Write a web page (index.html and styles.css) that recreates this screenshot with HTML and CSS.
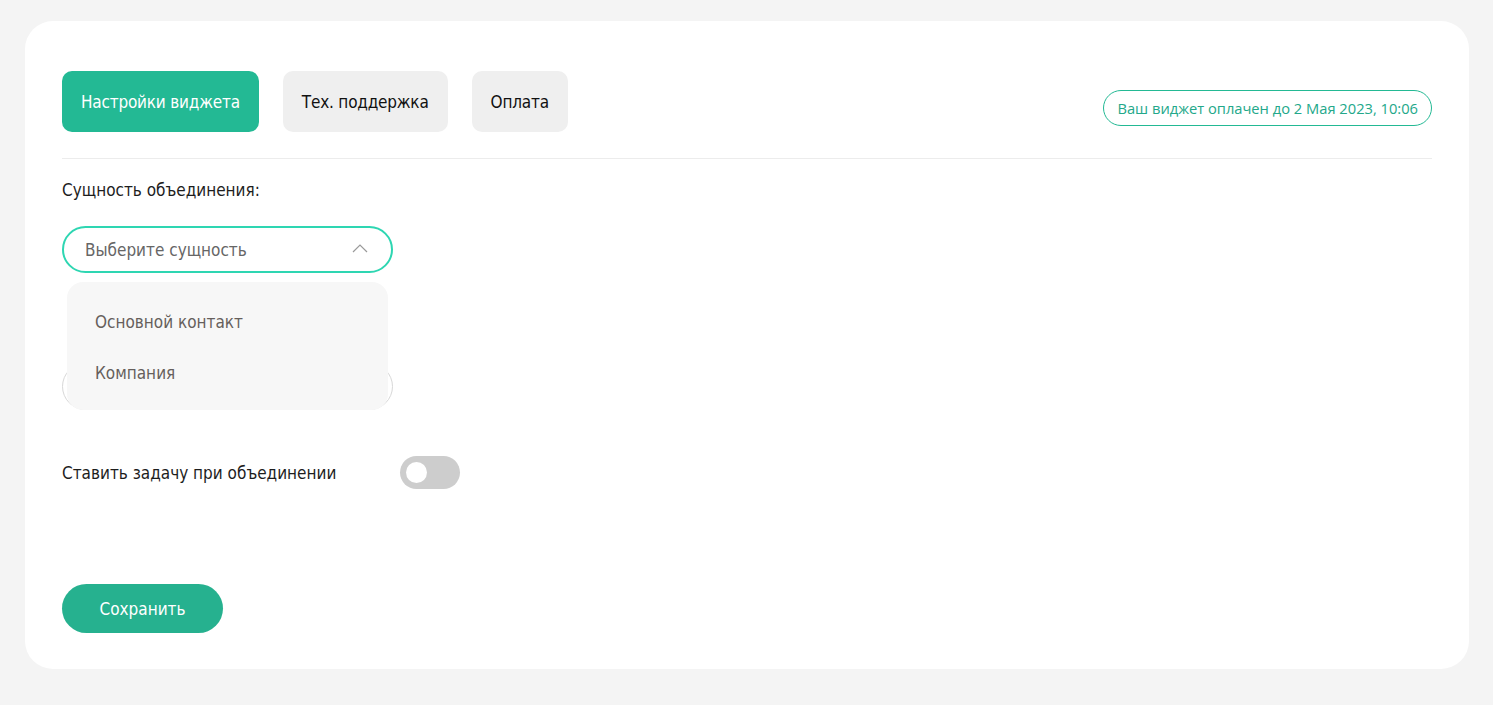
FILE: index.html
```html
<!DOCTYPE html>
<html lang="ru">
<head>
<meta charset="utf-8">
<link rel="stylesheet" href="styles.css">
</head>
<body>
<div class="card">
  <div class="top">
    <div class="tabs">
      <button class="tab tab-active">Настройки виджета</button>
      <button class="tab">Тех. поддержка</button>
      <button class="tab">Оплата</button>
    </div>
    <div class="badge">Ваш виджет оплачен до 2 Мая 2023, 10:06</div>
  </div>
  <div class="divider"></div>
  <div class="label">Сущность объединения:</div>
  <div class="field">
    <div class="select select-open">
      <span class="placeholder">Выберите сущность</span>
      <svg class="chev" width="16" height="9" viewBox="0 0 16 9"><path d="M1 8 L8 1 L15 8" fill="none" stroke="#9a9a9a" stroke-width="1.2"/></svg>
    </div>
    <div class="dropdown">
      <div class="option">Основной контакт</div>
      <div class="option">Компания</div>
    </div>
    <div class="spacer"></div>
    <div class="select select-muted"></div>
  </div>
  <div class="toggle-row">
    <span class="toggle-label">Ставить задачу при объединении</span>
    <span class="toggle"><span class="knob"></span></span>
  </div>
  <button class="save">Сохранить</button>
</div>
</body>
</html>
```
FILE: styles.css
```css
* { box-sizing: border-box; }
body {
  margin: 0;
  background: #f4f4f4;
  font-family: "DejaVu Sans Condensed", Roboto, "Liberation Sans", sans-serif;
  color: #1d1d1d;
  padding: 21px 24px 36px 25px;
}
.card {
  background: #fff;
  border-radius: 28px;
  height: 648px;
  padding: 50px 37px;
}
.top {
  display: flex;
  justify-content: space-between;
  align-items: flex-start;
}
.tabs { display: flex; gap: 24px; }
.tab {
  font-family: inherit;
  border: none;
  height: 61px;
  border-radius: 10px;
  background: #efefef;
  color: #111;
  font-size: 17px;
  letter-spacing: -0.2px;
  padding: 0 19px;
}
.tab-active { background: #23b994; color: #fff; }
.badge {
  margin-top: 19px;
  height: 36px;
  border: 1px solid #23b994;
  border-radius: 18px;
  color: #23a88a;
  display: flex;
  align-items: center;
  padding: 0 13px;
  font-family: "Open Sans", sans-serif;
  font-size: 14.7px;
}
.divider {
  height: 1px;
  background: #ececec;
  margin-top: 26px;
}
.label {
  margin-top: 20px;
  font-size: 17px;
  line-height: 22px;
}
.field {
  position: relative;
  width: 331px;
  margin-top: 25px;
}
.select {
  height: 47px;
  border-radius: 24px;
  display: flex;
  align-items: center;
  justify-content: space-between;
  padding: 0 23px 0 21px;
}
.select-open { border: 2px solid #2ed6b2; }
.select-muted { border: 1px solid #d8d8d8; }
.placeholder { color: #666; font-size: 17px; }
.chev { margin-top: -3px; }
.spacer { height: 90px; }
.dropdown {
  position: absolute;
  left: 5px;
  top: 56px;
  width: 321px;
  height: 128px;
  background: #f7f7f7;
  border-radius: 16px;
  padding: 29px 28px;
  z-index: 2;
}
.option {
  font-size: 17px;
  color: #665f5c;
  line-height: 22px;
  margin-bottom: 29px;
}
.toggle-row {
  display: flex;
  align-items: center;
  margin-top: 46px;
}
.toggle-label { width: 338px; font-size: 17px; }
.toggle {
  width: 60px;
  height: 33px;
  border-radius: 17px;
  background: #cdcdcd;
  display: flex;
  align-items: center;
  padding-left: 6px;
}
.knob {
  width: 21px;
  height: 21px;
  border-radius: 50%;
  background: #fff;
}
.save {
  display: block;
  margin-top: 95px;
  width: 161px;
  height: 49px;
  border: none;
  border-radius: 25px;
  background: #26b18f;
  color: #fff;
  font-family: inherit;
  font-size: 17px;
}
```
